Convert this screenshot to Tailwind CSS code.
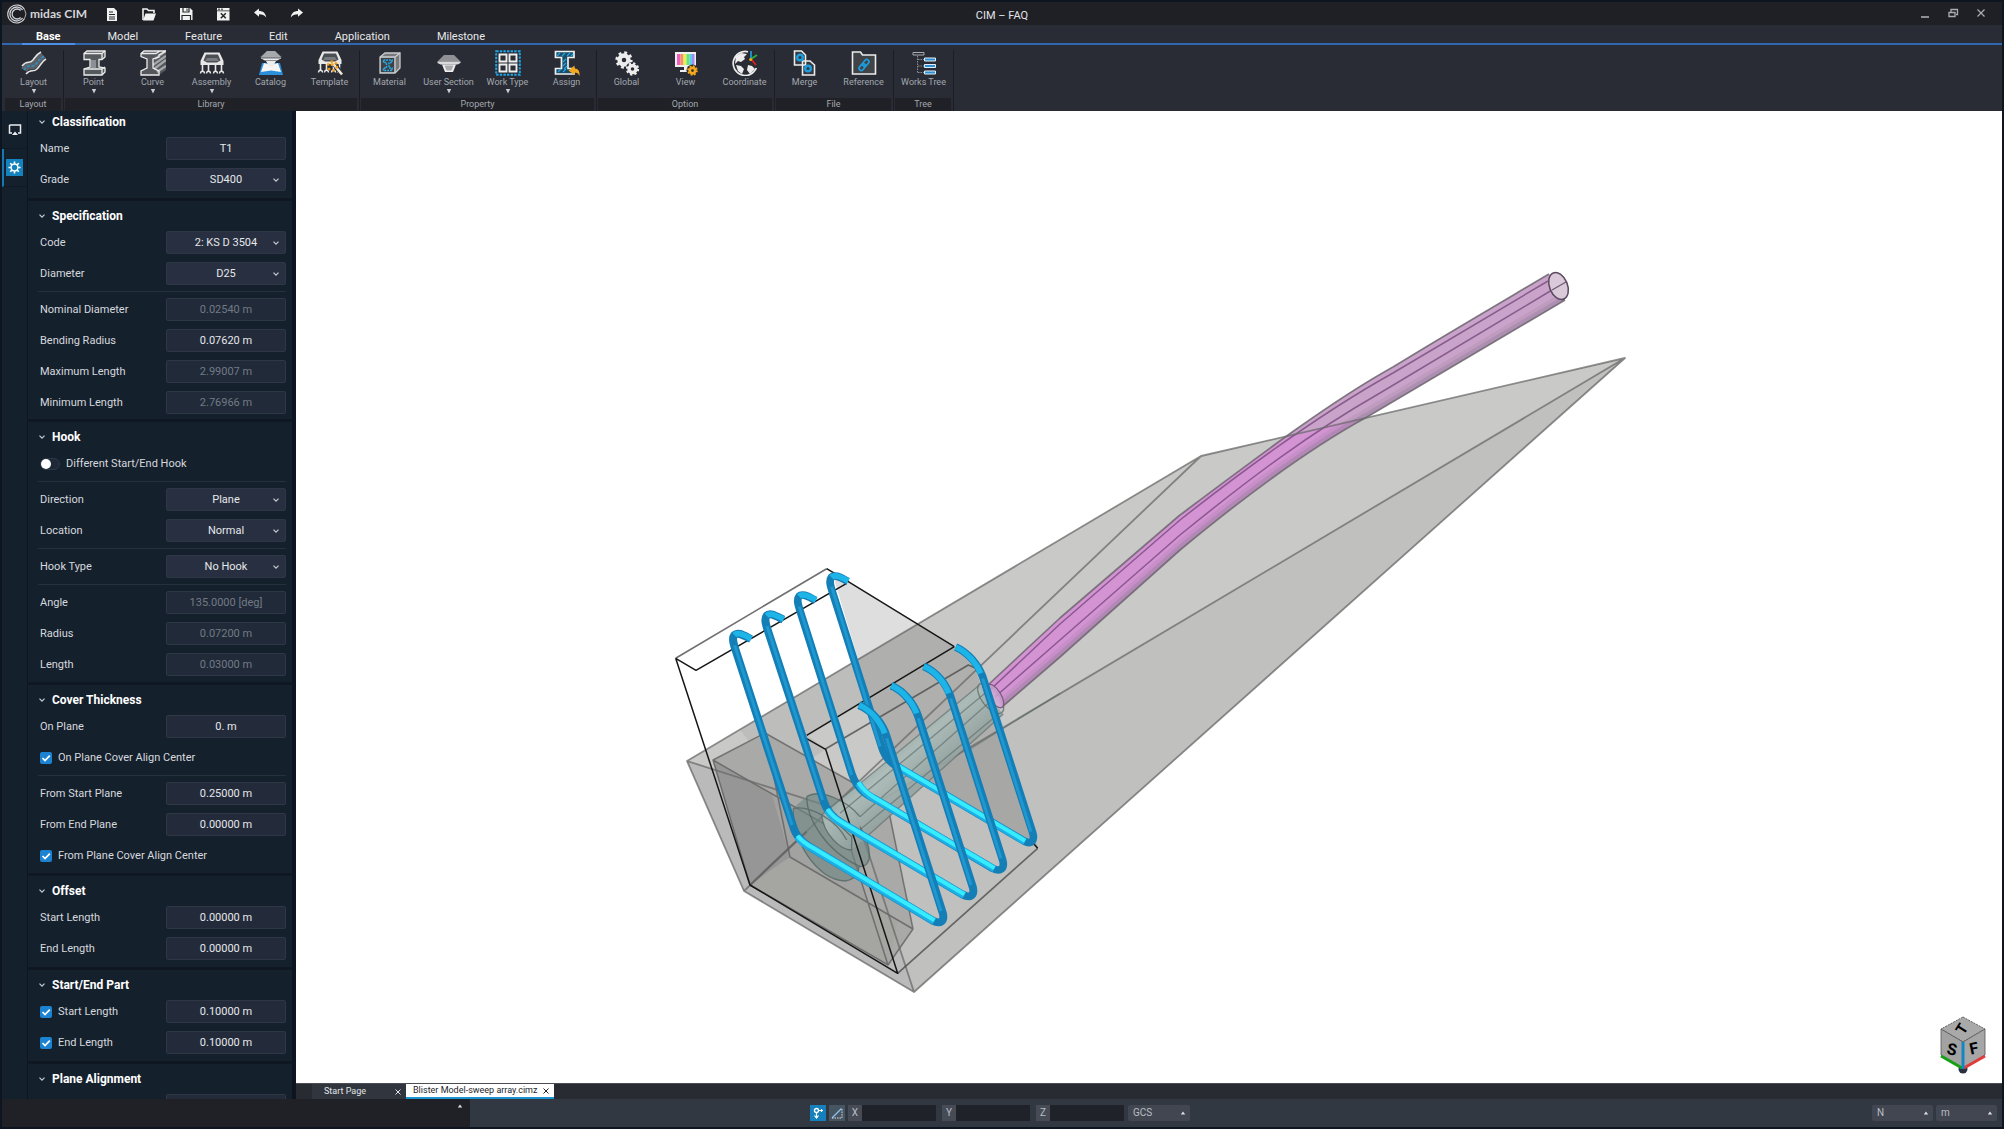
<!DOCTYPE html>
<html lang="en">
<head>
  <meta charset="UTF-8" />
  <meta name="viewport" content="width=device-width, initial-scale=1.0"/>
  <title>CIM – FAQ</title>
  <script src="https://cdn.jsdelivr.net/npm/@tailwindcss/browser@4"></script>
  <style>
    body { font-family: Roboto, 'Noto Sans', sans-serif; }
    select { text-align-last: center; }
    .left select { text-align-last: left; }
  </style>
</head>
<body class="h-screen flex flex-col overflow-hidden bg-[#0d1520] p-[2px] text-[#d5d9de]">

  <!-- Shared icons -->
  <svg class="hidden">
    <symbol id="chev" viewBox="0 0 8 8"><path d="M1.5 2.7 4 5.2l2.5-2.5" fill="none" stroke="#c8ccd2" stroke-width="1.2"/></symbol>
    <symbol id="tick" viewBox="0 0 12 12"><path d="M2.5 6 5 8.5 9.8 3.6" fill="none" stroke="#fff" stroke-width="1.7"/></symbol>
    <symbol id="down" viewBox="0 0 6 6"><path d="M.8 1h4.4L3 5.4z" fill="#c9ccd0"/></symbol>
    <symbol id="up" viewBox="0 0 6 6"><path d="M.8 4.6h4.4L3 1.6z" fill="#dcdfe3"/></symbol>
    <symbol id="cross" viewBox="0 0 8 8"><path d="m1.5 1.5 5 5m0-5-5 5" fill="none" stroke="currentColor" stroke-width="1"/></symbol>
    <symbol id="truss" viewBox="0 0 26 26">
      <path d="M5.500 2.500h15l4 8.500v4H1.500v-4z" fill="#e8e8e8"/>
      <path d="M7 4.500h12l2.500 6-3.500 2H8l-3.500-2z" fill="#4b4e53"/>
      <path d="M8 8h10l2 3H6z" fill="#777a7e"/>
      <path d="M3.500 15v7M9.500 15v7M16.500 15v7M22.500 15v7" stroke="#e8e8e8" stroke-width="1.600"/>
      <path d="M1.500 23.500c0-3 4-3 4 0M7.500 23.500c0-3 4-3 4 0M14.500 23.500c0-3 4-3 4 0M20.500 23.500c0-3 4-3 4 0" fill="none" stroke="#e8e8e8" stroke-width="1.300"/>
    </symbol>
    <symbol id="gear" viewBox="0 0 20 20">
      <circle cx="10" cy="10" r="8" fill="none" stroke="currentColor" stroke-width="3.200" stroke-dasharray="3.140 3.140"/>
      <circle cx="10" cy="10" r="5" fill="none" stroke="currentColor" stroke-width="5"/>
    </symbol>
  </svg>

  <!-- Title bar -->
  <header class="flex h-[23px] shrink-0 items-center bg-[#1f2025] relative">
    <div class="flex w-[102px] items-center gap-[3px] pl-[5px]">
      <svg class="size-5 shrink-0" viewBox="0 0 20 20" fill="none" stroke="#cfd2d6">
        <path d="M17.500 5.500A9 9 0 1 0 17.500 14.500" stroke-width="1.100"/>
        <path d="M15.600 6A7 7 0 1 0 15.600 14" stroke-width="1.300"/>
        <path d="M13.700 6.500A5 5 0 1 0 13.700 13.500" stroke-width="1.300"/>
        <path d="M17.500 5.500Q20.500 10 17.500 14.500" stroke-width=".8"/>
      </svg>
      <span class="whitespace-nowrap font-[Lato] text-[12px] font-bold leading-4 text-[#d3d5d9]">midas CIM</span>
    </div>
    <div class="flex gap-[21px]">
      <button aria-label="New"><svg class="size-4" viewBox="0 0 16 16"><path d="M3 2h7l3 3v10H3z" fill="#f2f2f2"/><path d="M5 6h4M5 8.500h6M5 11h6M5 13h6" stroke="#25262b"/></svg></button>
      <button aria-label="Open"><svg class="size-4" viewBox="0 0 16 16"><path d="M2 14V3h4l1.500 1.500H13V7" fill="none" stroke="#f2f2f2" stroke-width="1.600"/><path d="M4.500 7.500H15l-2.500 7H2z" fill="#f2f2f2"/></svg></button>
      <button aria-label="Save"><svg class="size-4" viewBox="0 0 16 16"><path d="M2 2h10l2.500 2.500V14H2z" fill="#f2f2f2"/><path d="M5 2v4h6V2M4 14V9.500h8.500V14" fill="none" stroke="#25262b" stroke-width="1.200"/><path d="M9 2.500v2.500" stroke="#25262b"/></svg></button>
      <button aria-label="Close file"><svg class="size-4" viewBox="0 0 16 16"><path d="M2 2h12.500v2.500H2zM2 5.200h12.500v9.300H2z" fill="#f2f2f2"/><path d="M3 3.200h2m1 0h2" stroke="#25262b"/><path d="m5.800 7.300 5 5m0-5-5 5" stroke="#25262b" stroke-width="1.500"/></svg></button>
      <button aria-label="Undo"><svg class="size-4" viewBox="0 0 16 16"><path d="m2 6.500 5-4v2.600c4 0 6.500 2 7.200 6.400C12.500 9 10.500 8.300 7 8.300v2.400z" fill="#f2f2f2"/></svg></button>
      <button aria-label="Redo"><svg class="size-4" viewBox="0 0 16 16"><path d="m14 6.500-5-4v2.600c-4 0-6.500 2-7.200 6.400C3.500 9 5.500 8.300 9 8.300v2.400z" fill="#f2f2f2"/></svg></button>
    </div>
    <h1 class="absolute inset-x-0 text-center text-[11px] leading-4 pt-1 pointer-events-none text-[#e3e5e8]">CIM – FAQ</h1>
    <div class="ml-auto flex gap-3 pr-[13px] text-[#a9adb3]">
      <button aria-label="Minimize"><svg class="size-4" viewBox="0 0 16 16"><path d="M4 11h8" stroke="currentColor" stroke-width="1.600"/></svg></button>
      <button aria-label="Restore"><svg class="size-4" viewBox="0 0 16 16" fill="none" stroke="currentColor"><path d="M4 6.500h6v4H4z" stroke-width="1.300"/><path d="M6 6V3.500h6.500v5H11" stroke-width="1.300"/></svg></button>
      <button aria-label="Close"><svg class="size-4" viewBox="0 0 16 16"><path d="m4.500 3.500 7 7m0-7-7 7" stroke="currentColor" stroke-width="1.200"/></svg></button>
    </div>
  </header>

  <!-- Menu tabs -->
  <nav class="flex h-5 shrink-0 gap-[19px] border-b-2 border-[#2f68ae] bg-[#292c34] pl-5 text-[11px] leading-[23px] text-[#e6e8ea]">
    <a href="#" class="h-5 border-b-2 border-[#4a8fe8] px-[14px] font-bold text-white">Base</a>
    <a href="#" class="px-[14px]">Model</a>
    <a href="#" class="px-[14px]">Feature</a>
    <a href="#" class="px-[14px]">Edit</a>
    <a href="#" class="px-[14px]">Application</a>
    <a href="#" class="px-[14px]">Milestone</a>
  </nav>

  <!-- Ribbon -->
  <div class="flex h-[66px] shrink-0 bg-[#292c34] pl-[2px] pt-[5px] text-[9px] leading-3 text-[#a3a8b0] whitespace-nowrap">
    <section class="flex flex-col justify-between border-r border-[#1b1d22]">
      <div class="flex">
        <button class="flex w-[59px] flex-col items-center">
          <svg class="size-[26px]" viewBox="0 0 26 26"><path d="M3 20c5-8 7-1 11-6s5-6 8-9" fill="none" stroke="#5b5f66" stroke-width="7"/><path d="M1 16c6-7 7-1 11-6 3-4 4-6 8-8M5 24c5-6 7-1 11-5s5-8 9-10" fill="none" stroke="#e4e4e4" stroke-width="1.600"/><path d="M3 20c5-8 8-1 12-6s5-6 8-8" fill="none" stroke="#1c9ad6" stroke-width="1.300" stroke-dasharray="3 1.500"/></svg>
          <span>Layout</span><svg class="size-[6px]"><use href="#down"/></svg>
        </button>
      </div>
      <h2 class="ml-px mr-[2px] h-[13px] bg-[#202126] text-center leading-[13px]">Layout</h2>
    </section>

    <section class="flex flex-col justify-between border-r border-[#1b1d22]">
      <div class="flex">
        <button class="flex w-[59px] flex-col items-center">
          <svg class="size-[26px]" viewBox="0 0 26 26"><path d="M3 3.500 6 1h18v6l-3 2.500h-3V17l6 1v4l-3 3H3v-6l6-2V9.500H3z" fill="#56595e" stroke="#ececec" stroke-width="1.300"/><path d="M3 3.500h18V9M21 3.500 24 1M3 19h18v6M21 19l3-2" fill="none" stroke="#ececec" stroke-width="1.300"/><path d="M10 10h5v8h-5z" fill="#8c8f93"/></svg>
          <span>Point</span><svg class="size-[6px]"><use href="#down"/></svg>
        </button>
        <button class="flex w-[59px] flex-col items-center">
          <svg class="size-[26px]" viewBox="0 0 26 26"><path d="M1 3.500 4 1h22v19l-7 5H1v-4l6-2V8L1 6.500z" fill="#54575c"/><path d="M15 9 26 1M13 15 26 6M14 19l12-9M17 22l9-6" stroke="#a5a7aa" stroke-width="2.200"/><path d="M1 3.500 4 1h22L19 5v2l-6 2v9l6 3v4H1v-4l6-3V9L1 6.500zM1 3.500h15L20 1" fill="none" stroke="#ececec" stroke-width="1.300"/></svg>
          <span>Curve</span><svg class="size-[6px]"><use href="#down"/></svg>
        </button>
        <button class="flex w-[59px] flex-col items-center">
          <svg class="size-[26px]"><use href="#truss"/></svg>
          <span>Assembly</span><svg class="size-[6px]"><use href="#down"/></svg>
        </button>
        <button class="flex w-[59px] flex-col items-center">
          <svg class="size-[26px]" viewBox="0 0 26 26"><path d="m1 25 3-12h18l3 12z" fill="#2b8fdc"/><path d="m3 22 3-9 7 2 7-2 3 9-10-1.500z" fill="#f5f5f5"/><path d="m9 1-7 6 2 1.500h18L24 7l-7-6z" fill="#5b5e63"/><path d="M9 1h8l6 6H3zM3 7.500h20v1.500H3z" fill="#a6a8ab"/><path d="m4 9 3 1.500h12L22 9zM8 11h10l-3 5.500h-4z" fill="#ededed"/></svg>
          <span>Catalog</span>
        </button>
        <button class="flex w-[59px] flex-col items-center">
          <svg class="size-[26px]" viewBox="0 0 26 26"><use href="#truss" y="-1"/><path d="m17 14 8 10" stroke="#292c34" stroke-width="4.500"/><path d="m16 13.500 9 11" stroke="#f4e7d7" stroke-width="2.600"/><circle cx="15.500" cy="16" r="4.500" fill="none" stroke="#f39c12" stroke-width="2.400" stroke-dasharray="2.400 2.300"/><circle cx="15" cy="14.500" r="1.600" fill="#f6a623"/></svg>
          <span>Template</span>
        </button>
      </div>
      <h2 class="ml-px mr-[2px] h-[13px] bg-[#202126] text-center leading-[13px]">Library</h2>
    </section>

    <section class="flex flex-col justify-between border-r border-[#1b1d22]">
      <div class="flex">
        <button class="flex w-[59px] flex-col items-center">
          <svg class="size-[26px]" viewBox="0 0 26 26" fill="none"><path d="m3 7 5-4h15v15l-5 5H3z" fill="#77797d" stroke="#c9cbcd" stroke-width="1.300"/><path d="M3 7h15v16M18 7l5-4" stroke="#c9cbcd" stroke-width="1.300"/><path d="M4 8h13v14H4z" fill="#3d4248"/><path d="M6.500 10h8.500v2.500h-3V18h3v2.500H6.500V18h3v-5.500h-3z" stroke="#26b1ee" stroke-width="1.500" stroke-dasharray="1.800 1"/></svg>
          <span>Material</span>
        </button>
        <button class="flex w-[59px] flex-col items-center">
          <svg class="size-[26px]" viewBox="0 0 26 26"><path d="M8 5h10l6.500 6.500H1.500z" fill="#8f9194"/><path d="M1.500 11.500h23V13l-3 1.500h-17l-3-1.500z" fill="#d9dadb"/><path d="M6 14.500h14L17 22H9z" fill="#efefef"/><path d="M8.500 15.500h9l-2 5h-5z" fill="#a9abae"/></svg>
          <span>User Section</span><svg class="size-[6px]"><use href="#down"/></svg>
        </button>
        <button class="flex w-[59px] flex-col items-center">
          <svg class="size-[26px]" viewBox="0 0 26 26" fill="none"><path d="M1.200 1.200h23.600v23.600H1.200z" stroke="#1fa5e6" stroke-width="2" stroke-dasharray="2.400 1.200"/><path d="M4.500 4.500h7v7h-7zM14.500 4.500h7v7h-7zM4.500 14.500h7v7h-7zM14.500 14.500h7v7h-7z" stroke="#efefef" stroke-width="1.900" fill="#2d3036"/></svg>
          <span>Work Type</span><svg class="size-[6px]"><use href="#down"/></svg>
        </button>
        <button class="flex w-[59px] flex-col items-center">
          <svg class="size-[26px]" viewBox="0 0 26 26"><path d="M1.500 1.500h18.500v6h-6v11h6v5.500H1.500v-5.500h6v-11h-6z" fill="#1b4d69" stroke="#efefef" stroke-width="1.700"/><path d="m3 6 3-3m2 3 3-3m2 3 3-3m1 3 2-2M9 12l3-3m-3 7 3-3M4 22l3-3m2 3 3-3m-2 0 3-3" stroke="#25a9e8" stroke-width="1.100"/><path d="m14.500 20.500 6-5v3c4 0 5.500 3 5 7.500-1-2.500-2.500-3.500-5-3.500v2.500z" fill="#f6a81c"/></svg>
          <span>Assign</span>
        </button>
      </div>
      <h2 class="ml-px mr-[2px] h-[13px] bg-[#202126] text-center leading-[13px]">Property</h2>
    </section>

    <section class="flex flex-col justify-between border-r border-[#1b1d22]">
      <div class="flex">
        <button class="flex w-[59px] flex-col items-center">
          <svg class="size-[26px] text-[#ececec]" viewBox="0 0 26 26"><use href="#gear" x="1" y="1" width="18" height="18"/><circle cx="18.500" cy="19" r="7" fill="#292c34"/><use href="#gear" x="11.500" y="12" width="14" height="14"/></svg>
          <span>Global</span>
        </button>
        <button class="flex w-[59px] flex-col items-center">
          <svg class="size-[26px]" viewBox="0 0 26 26"><path d="M2 2h21v15H2z" fill="#f0f0f0"/><path d="M4 4h3.500v11H4z" fill="#ef5fc0"/><path d="M7.500 4h3v11h-3z" fill="#f5935c"/><path d="M10.500 4h3v11h-3z" fill="#e8ee5a"/><path d="M13.500 4h3v11h-3z" fill="#66e46e"/><path d="M16.500 4h2.500v11h-2.500z" fill="#58cfee"/><path d="M19 4h2.500v11H19z" fill="#a58cf2"/><path d="M11 17h4v4h-4zM7 20h9v2H7z" fill="#f0f0f0"/><circle cx="19.500" cy="20.500" r="6" fill="#292c34"/><use href="#gear" x="14" y="15" width="11" height="11" class="text-[#f6a81c]"/></svg>
          <span>View</span>
        </button>
        <button class="flex w-[59px] flex-col items-center">
          <svg class="size-[26px]" viewBox="0 0 26 26" fill="none"><path d="M16 1.800A12 12 0 1 0 24.300 18" stroke="#ececec" stroke-width="1.700"/><path d="m4 6 5-3 6 1-3 3 1 2-4 3-3-1-3 3zM4 15l5 1 3 3-2 5-4-3zM16 15l4 1 3 3-5 5-3-4z" fill="#ececec"/><path d="M19 9V1" stroke="#1ca4e8" stroke-width="1.600"/><path d="m19 9 6-4" stroke="#23b53a" stroke-width="1.600"/><path d="m19 9 5 6" stroke="#de1f1f" stroke-width="1.800"/><circle cx="18.700" cy="9.500" r="1.600" fill="#f6a81c"/></svg>
          <span>Coordinate</span>
        </button>
      </div>
      <h2 class="ml-px mr-[2px] h-[13px] bg-[#202126] text-center leading-[13px]">Option</h2>
    </section>

    <section class="flex flex-col justify-between border-r border-[#1b1d22]">
      <div class="flex">
        <button class="flex w-[59px] flex-col items-center">
          <svg class="size-[26px]" viewBox="0 0 26 26"><path d="M2.500 1h7l4 4v10h-11zM10.500 11h7.500l4.500 4v10h-12z" fill="#36393f" stroke="#ececec" stroke-width="1.600"/><circle cx="8" cy="7.500" r="2.800" fill="none" stroke="#1c9fe0" stroke-width="2.400"/><circle cx="16" cy="18.500" r="2.800" fill="none" stroke="#1c9fe0" stroke-width="2.400"/></svg>
          <span>Merge</span>
        </button>
        <button class="flex w-[59px] flex-col items-center">
          <svg class="size-[26px]" viewBox="0 0 26 26" fill="none"><path d="M1.500 2h8l2 3h13v19h-23z" fill="#404348" stroke="#ececec" stroke-width="1.600"/><g transform="rotate(-50 13 15)" stroke="#1c9fe0" stroke-width="1.600"><rect x="6.500" y="12.800" width="7.500" height="4.400" rx="2.200"/><rect x="12" y="12.800" width="7.500" height="4.400" rx="2.200"/></g></svg>
          <span>Reference</span>
        </button>
      </div>
      <h2 class="ml-px mr-[2px] h-[13px] bg-[#202126] text-center leading-[13px]">File</h2>
    </section>

    <section class="flex flex-col justify-between border-r border-[#1b1d22]">
      <div class="flex">
        <button class="flex w-[59px] flex-col items-center">
          <svg class="size-[26px]" viewBox="0 0 26 26" fill="none"><path d="M2 2.500h11v2.500H2z" stroke="#a9acb0"/><path d="M6.500 6v17M7 9.500h6M7 16h6M7 22.500h6" stroke="#8b8e93" stroke-dasharray="1.500 1"/><path d="M13.500 8h11v3h-11zM13.500 14.500h11v3h-11zM13.500 21h11v3h-11z" fill="#2b8fd8" stroke="#e4eef6"/></svg>
          <span>Works Tree</span>
        </button>
      </div>
      <h2 class="ml-px mr-[2px] h-[13px] bg-[#202126] text-center leading-[13px]">Tree</h2>
    </section>
  </div>

  <!-- Workspace -->
  <main class="flex min-h-0 flex-1">
    <!-- Side rail -->
    <aside class="flex w-[26px] shrink-0 flex-col border-r border-[#0d1620] bg-[#15202d]">
      <button aria-label="Display" class="flex h-[38px] items-center justify-center border-b border-[#101925]"><svg class="size-[14px]" viewBox="0 0 14 14"><path d="M1.500 2h11v8H10M4 10H1.500V2" fill="none" stroke="#e9ebed" stroke-width="1.500"/><path d="m7 8.500 3 3.500H4z" fill="#e9ebed"/></svg></button>
      <button aria-label="Properties" class="flex h-[38px] items-center border-b border-l-2 border-b-[#101925] border-l-[#1379b0] pl-[2px]">
        <span class="flex size-[17px] items-center justify-center bg-[#1582be]"><svg class="size-[13px]" viewBox="0 0 14 14" fill="none" stroke="#fff"><circle cx="7" cy="7" r="3.700" stroke-width="1.600"/><path d="M7 .5v2.500M7 11v2.500M.5 7H3M11 7h2.500M2.400 2.400l1.800 1.800M9.800 9.800l1.800 1.800M11.600 2.400 9.800 4.200M4.200 9.800l-1.800 1.800" stroke-width="1.700"/></svg></span>
      </button>
    </aside>

    <!-- Property panel -->
    <form class="w-[268px] shrink-0 overflow-hidden border-r-4 border-[#0d1620] bg-[#15202d] text-[11px] leading-4">
      <fieldset class="-mt-1 px-[10px] pb-[7px] pr-[6px]">
        <h3 class="flex h-[30px] items-center gap-[6px] text-[12px] font-bold text-white"><svg class="size-2"><use href="#chev"/></svg>Classification</h3>
        <div class="flex flex-col gap-2 pl-[2px]">
          <div class="flex h-[23px] items-center justify-between"><label for="name">Name</label><input id="name" value="T1" class="h-[23px] w-[120px] rounded-xs border border-[#2d3745] bg-[#232b3b] text-center text-[#e6e8ea]"></div>
          <div class="flex h-[23px] items-center justify-between"><label for="grade">Grade</label><span class="relative"><select id="grade" class="block h-[23px] w-[120px] appearance-none rounded-xs border border-[#2d3745] bg-[#272f40] text-[#e6e8ea]"><option>SD400</option></select><svg class="pointer-events-none absolute right-[6px] top-2 size-2"><use href="#chev"/></svg></span></div>
        </div>
      </fieldset>

      <fieldset class="border-t-3 border-[#0e1722] px-[10px] pb-[5px] pr-[6px]">
        <h3 class="flex h-[30px] items-center gap-[6px] text-[12px] font-bold text-white"><svg class="size-2"><use href="#chev"/></svg>Specification</h3>
        <div class="flex flex-col gap-2 pl-[2px]">
          <div class="flex h-[23px] items-center justify-between"><label for="code">Code</label><span class="relative"><select id="code" class="block h-[23px] w-[120px] appearance-none rounded-xs border border-[#2d3745] bg-[#272f40] text-[#e6e8ea]"><option>2: KS D 3504</option></select><svg class="pointer-events-none absolute right-[6px] top-2 size-2"><use href="#chev"/></svg></span></div>
          <div class="flex h-[23px] items-center justify-between"><label for="dia">Diameter</label><span class="relative"><select id="dia" class="block h-[23px] w-[120px] appearance-none rounded-xs border border-[#2d3745] bg-[#272f40] text-[#e6e8ea]"><option>D25</option></select><svg class="pointer-events-none absolute right-[6px] top-2 size-2"><use href="#chev"/></svg></span></div>
        </div>
        <hr class="my-[6px] border-[#26303e]">
        <div class="flex flex-col gap-2 pl-[2px]">
          <div class="flex h-[23px] items-center justify-between"><label for="nom">Nominal Diameter</label><input id="nom" disabled value="0.02540 m" class="h-[23px] w-[120px] rounded-xs border border-[#2d3745] bg-[#212a39] text-center text-[#727a85]"></div>
          <div class="flex h-[23px] items-center justify-between"><label for="bend">Bending Radius</label><input id="bend" value="0.07620 m" class="h-[23px] w-[120px] rounded-xs border border-[#2d3745] bg-[#232b3b] text-center text-[#e6e8ea]"></div>
          <div class="flex h-[23px] items-center justify-between"><label for="max">Maximum Length</label><input id="max" disabled value="2.99007 m" class="h-[23px] w-[120px] rounded-xs border border-[#2d3745] bg-[#212a39] text-center text-[#727a85]"></div>
          <div class="flex h-[23px] items-center justify-between"><label for="min">Minimum Length</label><input id="min" disabled value="2.76966 m" class="h-[23px] w-[120px] rounded-xs border border-[#2d3745] bg-[#212a39] text-center text-[#727a85]"></div>
        </div>
      </fieldset>

      <fieldset class="border-t-3 border-[#0e1722] px-[10px] pb-[6px] pr-[6px]">
        <h3 class="flex h-[30px] items-center gap-[6px] text-[12px] font-bold text-white"><svg class="size-2"><use href="#chev"/></svg>Hook</h3>
        <div class="flex h-[23px] items-center gap-[6px] pl-[2px]">
          <input type="checkbox" id="diff" role="switch" class="h-3 w-5 appearance-none rounded-full border border-[#2d3745] bg-[#1f2836] before:block before:size-[10px] before:rounded-full before:bg-white">
          <label for="diff">Different Start/End Hook</label>
        </div>
        <hr class="my-[6px] border-[#26303e]">
        <div class="flex flex-col gap-2 pl-[2px]">
          <div class="flex h-[23px] items-center justify-between"><label for="dir">Direction</label><span class="relative"><select id="dir" class="block h-[23px] w-[120px] appearance-none rounded-xs border border-[#2d3745] bg-[#272f40] text-[#e6e8ea]"><option>Plane</option></select><svg class="pointer-events-none absolute right-[6px] top-2 size-2"><use href="#chev"/></svg></span></div>
          <div class="flex h-[23px] items-center justify-between"><label for="loc">Location</label><span class="relative"><select id="loc" class="block h-[23px] w-[120px] appearance-none rounded-xs border border-[#2d3745] bg-[#272f40] text-[#e6e8ea]"><option>Normal</option></select><svg class="pointer-events-none absolute right-[6px] top-2 size-2"><use href="#chev"/></svg></span></div>
        </div>
        <hr class="my-[6px] border-[#26303e]">
        <div class="flex flex-col gap-2 pl-[2px]">
          <div class="flex h-[23px] items-center justify-between"><label for="htype">Hook Type</label><span class="relative"><select id="htype" class="block h-[23px] w-[120px] appearance-none rounded-xs border border-[#2d3745] bg-[#272f40] text-[#e6e8ea]"><option>No Hook</option></select><svg class="pointer-events-none absolute right-[6px] top-2 size-2"><use href="#chev"/></svg></span></div>
        </div>
        <hr class="my-[6px] border-[#26303e]">
        <div class="flex flex-col gap-2 pl-[2px]">
          <div class="flex h-[23px] items-center justify-between"><label for="angle">Angle</label><input id="angle" disabled value="135.0000 [deg]" class="h-[23px] w-[120px] rounded-xs border border-[#2d3745] bg-[#212a39] text-center text-[#727a85]"></div>
          <div class="flex h-[23px] items-center justify-between"><label for="radius">Radius</label><input id="radius" disabled value="0.07200 m" class="h-[23px] w-[120px] rounded-xs border border-[#2d3745] bg-[#212a39] text-center text-[#727a85]"></div>
          <div class="flex h-[23px] items-center justify-between"><label for="len">Length</label><input id="len" disabled value="0.03000 m" class="h-[23px] w-[120px] rounded-xs border border-[#2d3745] bg-[#212a39] text-center text-[#727a85]"></div>
        </div>
      </fieldset>

      <fieldset class="border-t-3 border-[#0e1722] px-[10px] pb-[6px] pr-[6px]">
        <h3 class="flex h-[30px] items-center gap-[6px] text-[12px] font-bold text-white"><svg class="size-2"><use href="#chev"/></svg>Cover Thickness</h3>
        <div class="flex flex-col gap-2 pl-[2px]">
          <div class="flex h-[23px] items-center justify-between"><label for="onp">On Plane</label><input id="onp" value="0. m" class="h-[23px] w-[120px] rounded-xs border border-[#2d3745] bg-[#232b3b] text-center text-[#e6e8ea]"></div>
          <div class="flex h-[23px] items-center gap-[6px]"><span class="relative size-3"><input type="checkbox" id="opc" checked class="block size-3 appearance-none rounded-xs bg-[#1b83d2]"><svg class="pointer-events-none absolute inset-0 size-3"><use href="#tick"/></svg></span><label for="opc">On Plane Cover Align Center</label></div>
        </div>
        <hr class="my-[6px] border-[#26303e]">
        <div class="flex flex-col gap-2 pl-[2px]">
          <div class="flex h-[23px] items-center justify-between"><label for="fsp">From Start Plane</label><input id="fsp" value="0.25000 m" class="h-[23px] w-[120px] rounded-xs border border-[#2d3745] bg-[#232b3b] text-center text-[#e6e8ea]"></div>
          <div class="flex h-[23px] items-center justify-between"><label for="fep">From End Plane</label><input id="fep" value="0.00000 m" class="h-[23px] w-[120px] rounded-xs border border-[#2d3745] bg-[#232b3b] text-center text-[#e6e8ea]"></div>
          <div class="flex h-[23px] items-center gap-[6px]"><span class="relative size-3"><input type="checkbox" id="fpc" checked class="block size-3 appearance-none rounded-xs bg-[#1b83d2]"><svg class="pointer-events-none absolute inset-0 size-3"><use href="#tick"/></svg></span><label for="fpc">From Plane Cover Align Center</label></div>
        </div>
      </fieldset>

      <fieldset class="border-t-3 border-[#0e1722] px-[10px] pb-[7px] pr-[6px]">
        <h3 class="flex h-[30px] items-center gap-[6px] text-[12px] font-bold text-white"><svg class="size-2"><use href="#chev"/></svg>Offset</h3>
        <div class="flex flex-col gap-2 pl-[2px]">
          <div class="flex h-[23px] items-center justify-between"><label for="osl">Start Length</label><input id="osl" value="0.00000 m" class="h-[23px] w-[120px] rounded-xs border border-[#2d3745] bg-[#232b3b] text-center text-[#e6e8ea]"></div>
          <div class="flex h-[23px] items-center justify-between"><label for="oel">End Length</label><input id="oel" value="0.00000 m" class="h-[23px] w-[120px] rounded-xs border border-[#2d3745] bg-[#232b3b] text-center text-[#e6e8ea]"></div>
        </div>
      </fieldset>

      <fieldset class="border-t-3 border-[#0e1722] px-[10px] pb-[7px] pr-[6px]">
        <h3 class="flex h-[30px] items-center gap-[6px] text-[12px] font-bold text-white"><svg class="size-2"><use href="#chev"/></svg>Start/End Part</h3>
        <div class="flex flex-col gap-2 pl-[2px]">
          <div class="flex h-[23px] items-center gap-[6px]"><span class="relative size-3"><input type="checkbox" id="psl" checked class="block size-3 appearance-none rounded-xs bg-[#1b83d2]"><svg class="pointer-events-none absolute inset-0 size-3"><use href="#tick"/></svg></span><label for="psl">Start Length</label><input aria-label="Start part length" value="0.10000 m" class="ml-auto h-[23px] w-[120px] rounded-xs border border-[#2d3745] bg-[#232b3b] text-center text-[#e6e8ea]"></div>
          <div class="flex h-[23px] items-center gap-[6px]"><span class="relative size-3"><input type="checkbox" id="pel" checked class="block size-3 appearance-none rounded-xs bg-[#1b83d2]"><svg class="pointer-events-none absolute inset-0 size-3"><use href="#tick"/></svg></span><label for="pel">End Length</label><input aria-label="End part length" value="0.10000 m" class="ml-auto h-[23px] w-[120px] rounded-xs border border-[#2d3745] bg-[#232b3b] text-center text-[#e6e8ea]"></div>
        </div>
      </fieldset>

      <fieldset class="border-t-3 border-[#0e1722] px-[10px] pr-[6px]">
        <h3 class="flex h-[30px] items-center gap-[6px] text-[12px] font-bold text-white"><svg class="size-2"><use href="#chev"/></svg>Plane Alignment</h3>
        <div class="flex justify-end"><input aria-label="Alignment" class="h-[23px] w-[120px] rounded-xs border border-[#2d3745] bg-[#232b3b]"></div>
      </fieldset>
    </form>

    <div class="flex min-w-0 flex-1 flex-col">
      <!-- 3D view -->
      <div class="relative min-h-0 flex-1 bg-white">
        <svg class="absolute inset-0 size-full" viewBox="296 111 1706 972" fill="none" stroke-linejoin="round">
          <defs>
            <clipPath id="body"><path d="M687 761 1201 456 1625 358 914 992 744 891z"/></clipPath>
            <clipPath id="tube"><path d="M1549 274C1500 303 1440 338 1393 367C1330 402 1260 455 1180 515L1060 618 988 685 1002 707 1060 657 1180 550C1250 492 1310 448 1367 417L1565 300z"/></clipPath>
            <linearGradient id="duct" gradientUnits="userSpaceOnUse" x1="700" y1="560" x2="840" y2="720"><stop offset="0" stop-color="#93a5a2"/><stop offset=".3" stop-color="#abbcb9"/><stop offset=".55" stop-color="#9fb0ad"/><stop offset="1" stop-color="#8a9694"/></linearGradient>
          </defs>

          <!-- Concrete body -->
          <path d="M687 761 1201 456 1625 358 914 992 744 891z" fill="#c9c9c7"/>
          <path d="M1625 358 856 815 914 992z" fill="#c0c0bf"/>
          <path d="M687 761 856 815 914 992 744 891z" fill="#bababa"/>

          <!-- Back plane and top of the blister -->
          <path d="M832 572 847 581 954 647 975 668 1038 848 890 768z" fill="#000" fill-opacity=".13"/>
          <path d="M740 730 857 660 870 699 807 735 826 749 780 780z" fill="#000" fill-opacity=".06"/>

          <!-- Anchor block -->
          <path d="M713 760 765 733 857 785 888 807 913 929 888 965 750 885z" fill="#a9a9a7"/>
          <path d="M713 760 847 837 888 965 750 885z" fill="#a2a2a0"/>
          <path d="M713 760 772 795 790 857 750 885z" fill="#969696"/>
          <path d="M790 857 898 920 888 965 750 885z" fill="#a5a5a2"/>
          <path d="M765 733 857 785 888 807 913 929M713 760 765 733 790 857 913 929 888 965 750 885 713 760 847 837 888 965" stroke="#5c5c5c" stroke-opacity=".75" stroke-width="1.500"/>

          <!-- Tendon tube -->
          <g clip-path="url(#tube)">
            <path d="M960 250h640v480H960z" fill="#caa3ca"/>
            <path d="M940 250h700v480H940z" fill="#d494d4" clip-path="url(#body)"/>
            <path d="M1565 300 1367 417C1310 448 1250 492 1180 550L1060 657 1002 707" stroke="#8f7c98" stroke-opacity=".2" stroke-width="16"/>
            <path d="M1565 300 1367 417C1310 448 1250 492 1180 550L1060 657 1002 707" stroke="#8f7c98" stroke-opacity=".35" stroke-width="9"/>
          </g>
          <path d="M1549 274C1500 303 1440 338 1393 367C1330 402 1260 455 1180 515L1060 618 988 685M1565 300 1367 417C1310 448 1250 492 1180 550L1060 657 1002 707" stroke="#6d6670" stroke-opacity=".85" stroke-width="1.700"/>
          <path d="M1548 281 1393 373C1330 408 1260 457 1180 520L1060 624 990 690M1552 290 1380 393C1310 433 1250 478 1180 535L1060 640 995 697" stroke="#6a3f70" stroke-opacity=".7" stroke-width="1.500"/>
          <ellipse cx="1558.500" cy="286" rx="9" ry="14" transform="rotate(-22 1558.500 286)" fill="#d9c9d9" stroke="#5b4a5f" stroke-width="1.500"/>
          <path d="m1552 290 14-8" stroke="#6a5a6e" stroke-width="1.300"/>

          <!-- Body edges -->
          <path d="M687 761 1201 456 1625 358 914 992 744 891zM687 761 856 815 1625 358M856 815 914 992M744 891 1201 456" stroke="#6a6a6a" stroke-opacity=".75" stroke-width="1.800"/>

          <!-- Close-up part, three units per scene unit -->
          <g transform="translate(660 550) scale(.33333)">
            <path d="M440 740C415 760 400 770 400 790 400 880 470 985 550 993L585 985 600 950C630 950 640 900 605 840L560 770C520 735 470 720 440 740z" fill="#6f8783" fill-opacity=".6"/>
            <path d="M955 408 485 795C490 850 540 900 575 900L620 860 1030 492z" fill="url(#duct)" fill-opacity=".9"/>
            <path d="M955 408 485 795M1030 492 620 860M975 430 540 790M1005 500 575 860M990 455 600 800M925 600 1200 430" stroke="#5e6d6b" stroke-opacity=".65" stroke-width="4"/>
            <ellipse cx="992" cy="445" rx="26" ry="54" transform="rotate(-38 992 445)" stroke="#5e6d6b" stroke-width="4" stroke-opacity=".8"/>
            <ellipse cx="1005" cy="438" rx="18" ry="40" transform="rotate(-32 1005 438)" fill="#cfa6d2" fill-opacity=".8" stroke="#7d5a83" stroke-width="4"/>
            <path d="M440 740C440 800 490 900 600 950 640 950 635 890 600 830M440 740C480 715 560 750 600 800M400 775C395 870 470 990 555 993 580 990 600 970 595 950M400 775C450 765 530 810 560 870M485 795C490 850 540 900 575 900L575 860 500 790" stroke="#4f6462" stroke-opacity=".75" stroke-width="4"/>
            <path d="M270 1005 440 845" stroke="#555" stroke-opacity=".5" stroke-width="7"/>

            <!-- Blister box -->
            <path d="M47 325 500 56M495 598 925 345 960 360M713 1270 1133 895" stroke="#4d4d4d" stroke-opacity=".8" stroke-width="5"/>
            <path d="M500 56 560 92 883 290M47 325 108 361 560 100M47 325 270 1005 713 1270 497 598 440 566M440 556 883 290M1120 880 1133 895" stroke="#161616" stroke-width="4.500"/>

            <!-- Rebars, back to front -->
            <g>
              <path d="M564 94C540 82 524 72 514 82 506 92 512 110 518 128L665 590C675 625 695 642 725 657L1092 873C1115 885 1125 872 1118 848L968 380C955 345 925 308 887 291" stroke="#147eb6" stroke-width="23"/>
              <path d="M515 110 660 590M968 385 1113 845" stroke="#1f98d0" stroke-width="9"/>
              <path d="M715 651 1095 875" stroke="#1cb0e6" stroke-width="21"/>
              <path d="M715 648 1095 872" stroke="#38ecff" stroke-width="12"/>
              <path d="M565 93C540 80 524 72 514 82M887 291C925 308 952 345 962 370" stroke="#1db4e8" stroke-width="17"/>
            </g>
            <g>
              <path d="M467 151C443 139 427 129 417 139 409 149 415 167 421 185L575 670C590 715 615 732 645 747L998 955C1022 967 1035 955 1028 930L872 440C858 402 830 365 791 349" stroke="#147eb6" stroke-width="23"/>
              <path d="M418 170 575 675M872 445 1023 925" stroke="#1f98d0" stroke-width="9"/>
              <path d="M595 700C610 725 625 737 645 747L1003 957" stroke="#1cb0e6" stroke-width="21"/>
              <path d="M595 697C610 722 625 733 645 744L1003 954" stroke="#38ecff" stroke-width="12"/>
              <path d="M468 150C443 137 427 129 417 139M791 349C830 365 856 402 866 430" stroke="#1db4e8" stroke-width="17"/>
            </g>
            <g>
              <path d="M370 209C346 197 330 187 320 197 312 207 318 225 324 243L490 750C500 785 520 805 550 822L908 1034C932 1046 945 1035 938 1010L775 500C762 462 732 423 694 407" stroke="#147eb6" stroke-width="24"/>
              <path d="M321 228 488 750M775 505 933 1005" stroke="#1f98d0" stroke-width="9"/>
              <path d="M502 780C515 800 530 812 550 822L913 1036" stroke="#1cb0e6" stroke-width="22"/>
              <path d="M502 777C515 797 530 808 550 819L913 1033" stroke="#38ecff" stroke-width="12"/>
              <path d="M371 208C346 195 330 187 320 197M694 407C732 423 760 462 770 490" stroke="#1db4e8" stroke-width="17"/>
            </g>
            <g>
              <path d="M273 267C249 255 233 245 223 255 215 265 221 283 227 301L398 825C408 862 430 880 460 897L818 1112C842 1124 855 1113 848 1088L680 560C668 520 636 482 597 465" stroke="#147eb6" stroke-width="24"/>
              <path d="M224 286 396 825M680 565 843 1083" stroke="#1f98d0" stroke-width="9"/>
              <path d="M412 860C425 877 440 887 460 897L823 1114" stroke="#1cb0e6" stroke-width="22"/>
              <path d="M412 857C425 874 440 883 460 894L823 1111" stroke="#38ecff" stroke-width="12"/>
              <path d="M274 266C249 253 233 245 223 255M597 465C636 482 664 520 674 550" stroke="#1db4e8" stroke-width="17"/>
            </g>
          </g>
        </svg>

        <!-- View cube -->
        <svg class="absolute bottom-2 right-4 h-[60px] w-[46px]" viewBox="0 0 46 60">
          <circle cx="23" cy="54" r="4.500" fill="#2a3242"/>
          <path d="M23 2 45 14 23 27 1 14z" fill="#a9a9a9" stroke="#444" stroke-width=".8" stroke-dasharray="2 1"/>
          <path d="M1 14 23 27v26L1 40z" fill="#a2a2a2" stroke="#555" stroke-width=".8"/>
          <path d="M45 14 23 27v26l22-13z" fill="#a6a6a6" stroke="#555" stroke-width=".8"/>
          <path d="M1 41 22 53" stroke="#16a016" stroke-width="3"/>
          <path d="M45 41 24 53" stroke="#e23b3b" stroke-width="3"/>
          <path d="M23 27v27" stroke="#1486c4" stroke-width="3"/>
          <g fill="#000" font-family="Roboto" font-weight="700" text-anchor="middle">
            <text font-size="16" transform="rotate(12 12 34)" x="12" y="40">S</text>
            <text font-size="16" transform="rotate(-12 34 34)" x="34" y="39">F</text>
            <text font-size="15" transform="rotate(-58 22 14)" x="22" y="19">T</text>
          </g>
        </svg>
      </div>

      <!-- Document tabs -->
      <div class="flex h-4 shrink-0 border-t border-[#4a4d52] bg-[#282b32] pl-4 text-[9px] leading-[15px]">
        <div class="flex w-[94px] items-center justify-between bg-[#30353e] pl-3 pr-1 text-[#e3e5e8]"><a href="#">Start Page</a><button aria-label="Close Start Page"><svg class="size-2"><use href="#cross"/></svg></button></div>
        <div class="flex w-[148px] items-center justify-between border-b-2 border-[#1b93d2] bg-white pl-[7px] pr-1 text-[#23262b]"><a href="#" class="whitespace-nowrap">Blister Model-sweep array.cimz</a><button aria-label="Close model"><svg class="size-2"><use href="#cross"/></svg></button></div>
      </div>
    </div>
  </main>

  <!-- Status bar -->
  <footer class="flex h-7 shrink-0 items-center bg-[#323841] text-[10px] text-[#b9bec6]">
    <div class="flex h-full w-[468px] justify-end bg-[#202126] pr-[7px] pt-1"><button aria-label="Expand" class="h-[6px]"><svg class="size-[6px]"><use href="#up"/></svg></button></div>
    <div class="ml-[340px] flex items-center gap-[3px]">
      <button aria-label="Snap" class="flex size-4 items-center justify-center bg-[#1580bb]"><svg class="size-3" viewBox="0 0 12 12" fill="none" stroke="#fff"><circle cx="4.500" cy="3.500" r="2" stroke-width="1.400"/><path d="M6.500 3.500H11M9.500 2v3M4.500 5.500V11M2.500 8.500l2 2.500 2-2.500" stroke-width="1.200"/></svg></button>
      <button aria-label="Ortho" class="flex size-4 items-center justify-center bg-[#465560]"><svg class="size-3" viewBox="0 0 12 12" fill="none"><path d="M1 11 10.500 1.500" stroke="#8fc1f0" stroke-width="1.200"/><path d="M1 11h10V1.500" stroke="#d5dbe0" stroke-dasharray="1.500 1"/></svg></button>
      <div class="flex gap-[6px]">
        <div class="flex"><label for="x" class="h-4 w-[14px] bg-[#464b55] text-center leading-4">X</label><input id="x" class="h-4 w-[74px] bg-[#1f2329]"></div>
        <div class="flex"><label for="y" class="h-4 w-[14px] bg-[#464b55] text-center leading-4">Y</label><input id="y" class="h-4 w-[74px] bg-[#1f2329]"></div>
        <div class="flex"><label for="z" class="h-4 w-[14px] bg-[#464b55] text-center leading-4">Z</label><input id="z" class="h-4 w-[74px] bg-[#1f2329]"></div>
      </div>
      <span class="left relative ml-px"><select aria-label="Coordinate system" class="block h-4 w-[62px] appearance-none rounded-xs bg-[#414650] pl-[5px] leading-4"><option>GCS</option></select><svg class="pointer-events-none absolute right-1 top-[5px] size-[6px]"><use href="#up"/></svg></span>
    </div>
    <div class="left ml-auto flex gap-[3px] pr-[5px]">
      <span class="relative"><select aria-label="Force unit" class="block h-4 w-[61px] appearance-none rounded-xs bg-[#414650] pl-[5px] leading-4"><option>N</option></select><svg class="pointer-events-none absolute right-1 top-[5px] size-[6px]"><use href="#up"/></svg></span>
      <span class="relative"><select aria-label="Length unit" class="block h-4 w-[61px] appearance-none rounded-xs bg-[#414650] pl-[5px] leading-4"><option>m</option></select><svg class="pointer-events-none absolute right-1 top-[5px] size-[6px]"><use href="#up"/></svg></span>
    </div>
  </footer>

</body>
</html>
